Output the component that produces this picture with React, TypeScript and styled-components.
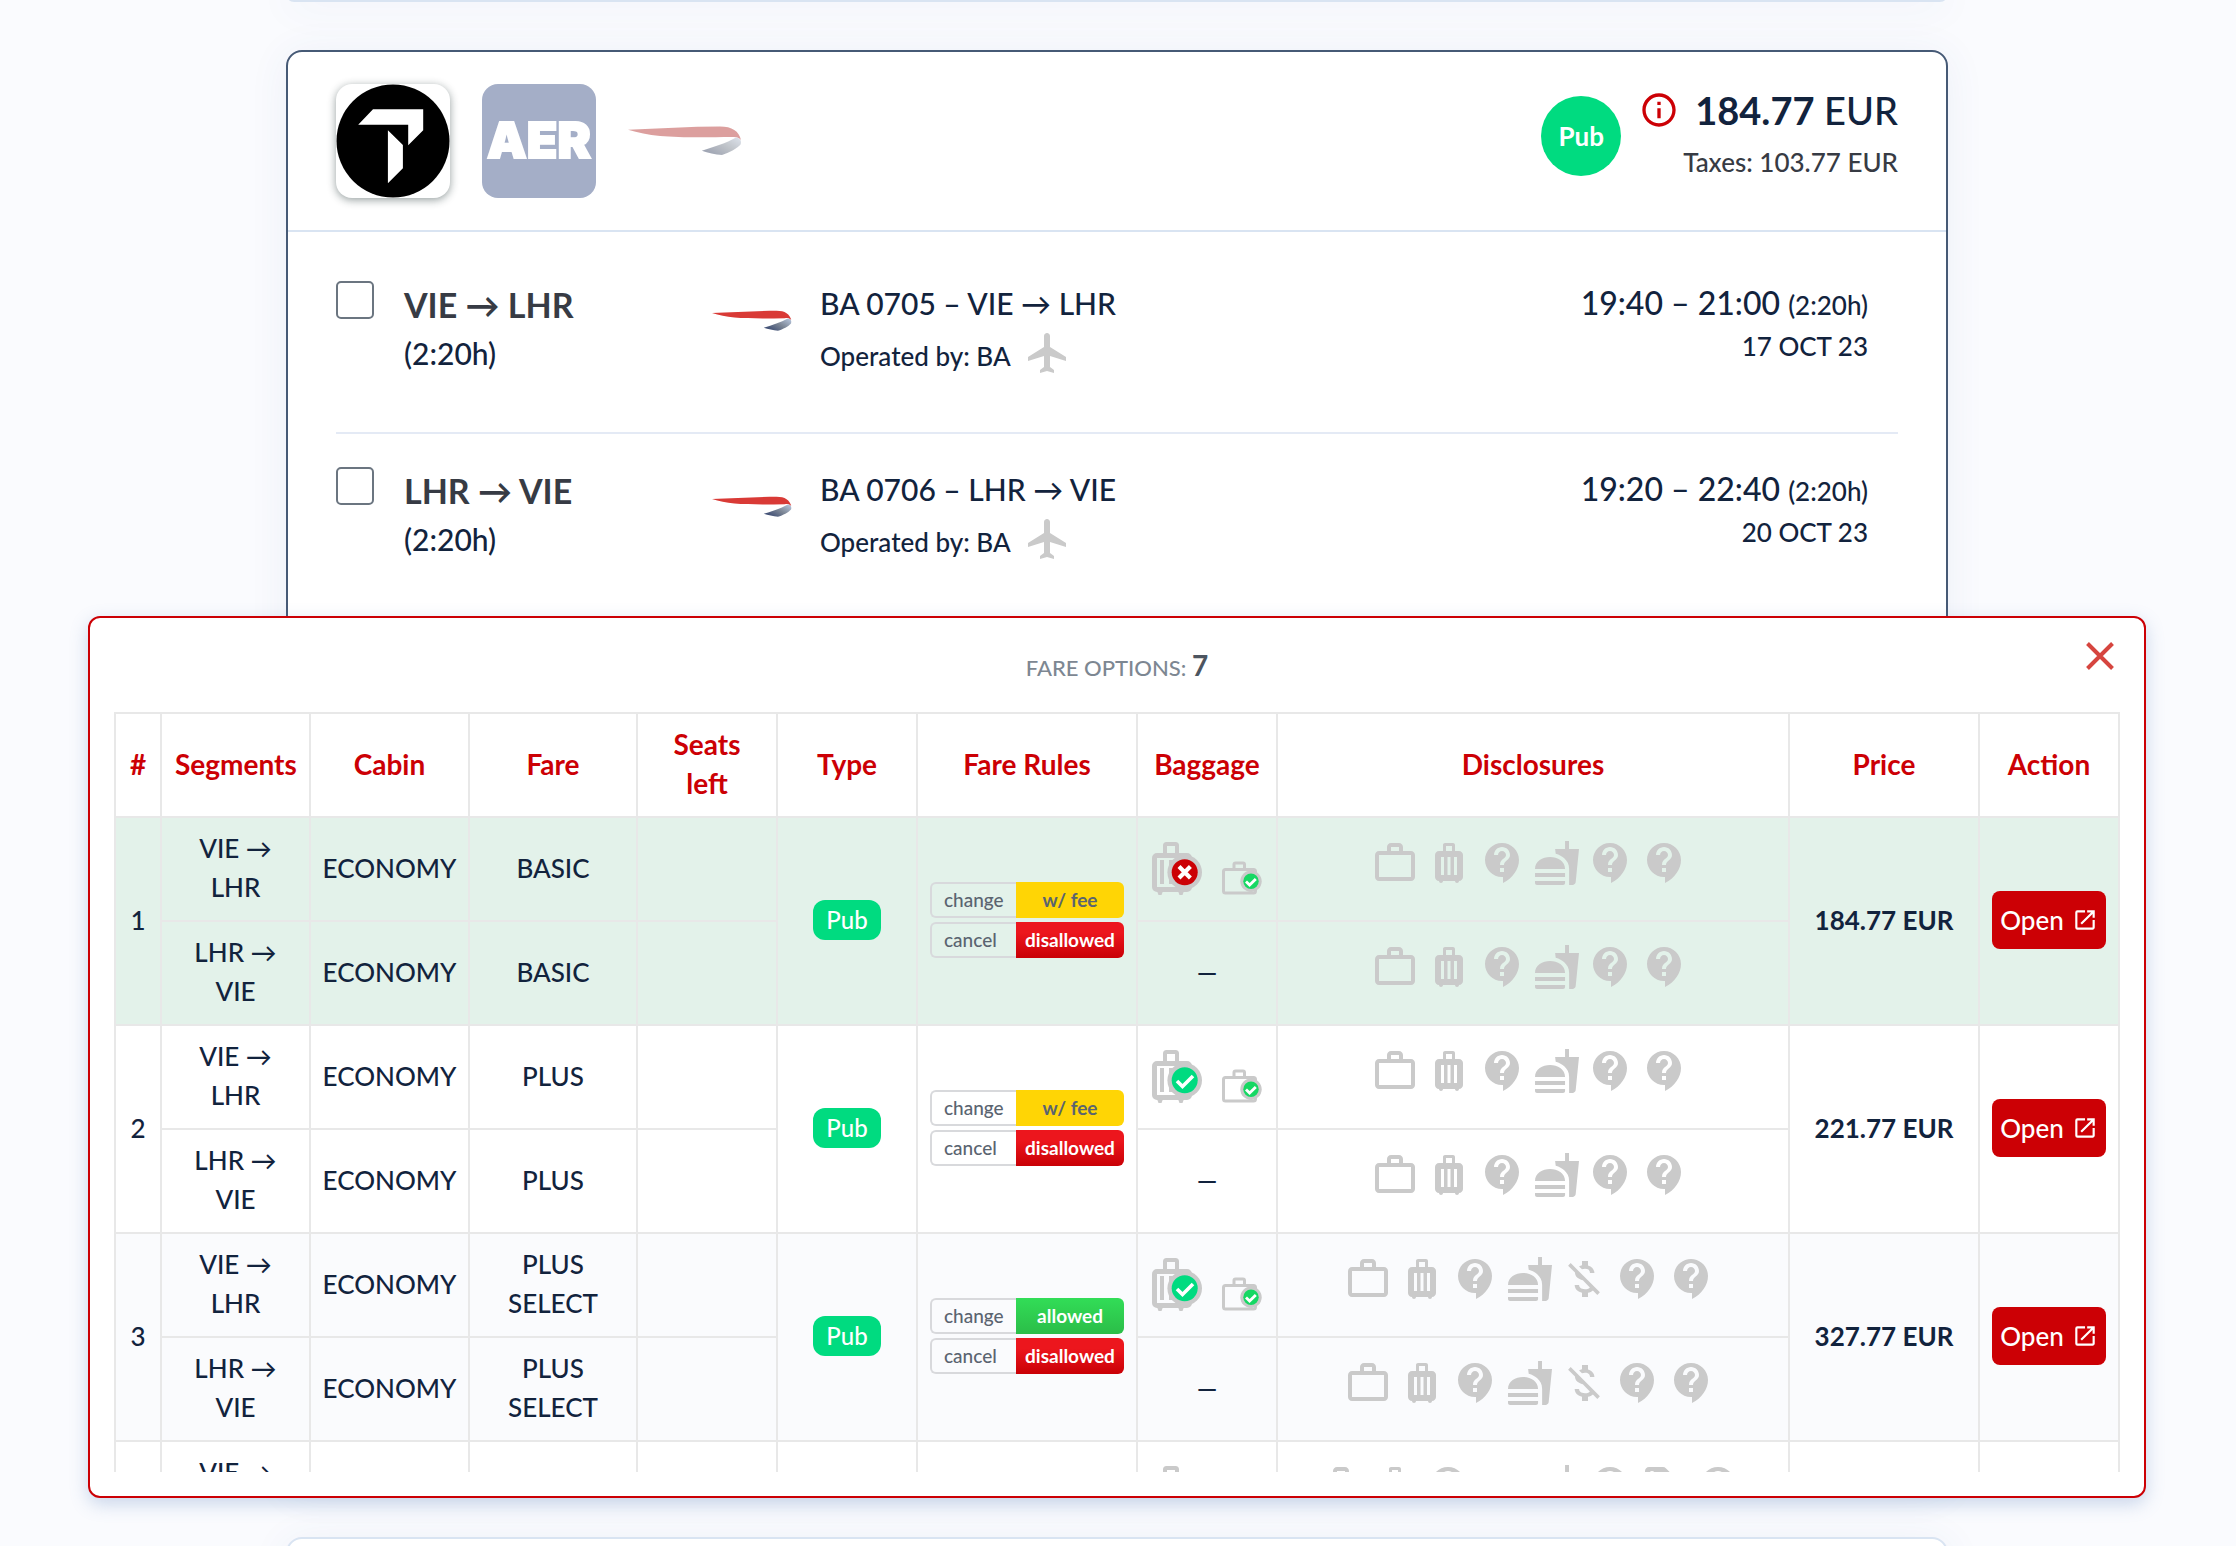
import React from "react";
import styled, { createGlobalStyle, css } from "styled-components";
import {
  MdContactSupport,
  MdFastfood,
  MdFlight,
  MdInfoOutline,
  MdLocalOffer,
  MdLuggage,
  MdMoneyOff,
  MdOpenInNew,
  MdWifi,
  MdWorkOutline,
} from "react-icons/md";

const color = {
  ink: "#12233d",
  inkSoft: "#373b44",
  muted: "#7d8792",
  slate: "#5a6470",
  red: "#cc0005",
  green: "#00db80",
  icon: "#cacaca",
  line: "#e8e8e8",
  cardLine: "#d9e4f2",
  page: "#fafbfe",
};

const GlobalStyle = createGlobalStyle`
  *, *::before, *::after { box-sizing: border-box; }
  body {
    margin: 0;
    background: ${color.page};
    color: ${color.ink};
    font-family: Lato, "Liberation Sans", sans-serif;
    font-size: 26px;
    font-weight: 500;
    line-height: 39px;
  }
`;

/* ---------- page and cards ---------- */

const Page = styled.main`
  height: 100vh;
  overflow: hidden;
  padding: 0 90px 0 88px;
`;

const Results = styled.div`
  display: flex;
  flex-direction: column;
  gap: 48px;
  margin: -14px 198px 0;
`;

const Card = styled.article<{ $active?: boolean }>`
  min-height: 16px;
  background: #fff;
  border: 2px solid ${(p) => (p.$active ? "#465a76" : color.cardLine)};
  border-radius: 16px;
  box-shadow: 0 4px 40px rgba(60, 85, 150, 0.07);
`;

const NextCard = styled(Card)`
  min-height: 80px;
`;

const CardHeader = styled.header`
  display: flex;
  justify-content: space-between;
  align-items: flex-start;
  padding: 32px 48px;
  border-bottom: 2px solid ${color.cardLine};
`;

const Logos = styled.div`
  display: flex;
  gap: 32px;
`;

const LogoTile = styled.div<{ $raised?: boolean; $faded?: boolean }>`
  width: 114px;
  height: 114px;
  border-radius: 16px;
  overflow: hidden;
  opacity: ${(p) => (p.$faded ? 0.5 : 1)};
  filter: ${(p) => (p.$faded ? "saturate(0.75)" : "none")};
  box-shadow: ${(p) => (p.$raised ? "0 2px 8px rgba(20, 40, 40, 0.45)" : "none")};
  svg {
    display: block;
    width: 100%;
    height: 100%;
  }
`;

const Summary = styled.div`
  display: flex;
  align-items: center;
  gap: 18px;
`;

const PubCircle = styled.span`
  display: flex;
  align-items: center;
  justify-content: center;
  width: 80px;
  height: 80px;
  border-radius: 50%;
  background: ${color.green};
  color: #fff;
  font-weight: 700;
`;

const Totals = styled.div`
  text-align: right;
  line-height: 52px;
`;

const TotalPrice = styled.div`
  display: flex;
  align-items: center;
  justify-content: flex-end;
  gap: 16px;
  font-size: 38px;
`;

const InfoButton = styled.button`
  display: flex;
  padding: 0;
  border: 0;
  background: none;
  color: ${color.red};
  font-size: 40px;
`;

const Taxes = styled.div`
  color: ${color.inkSoft};
`;

/* ---------- legs ---------- */

const Legs = styled.div`
  padding: 16px 48px 0;
`;

const Leg = styled.section`
  display: flex;
  align-items: flex-start;
  height: 184px;
  padding: 33px 30px 0 0;
  & + & {
    height: 186px;
    border-top: 2px solid #e4eaf5;
  }
`;

const Check = styled.input`
  appearance: none;
  flex: none;
  width: 38px;
  height: 38px;
  margin: 0 30px 0 0;
  border: 2px solid #6b7580;
  border-radius: 5px;
  background: #fff;
`;

const Route = styled.div`
  flex: 0 0 308px;
  font-size: 30px;
  line-height: 48px;
`;

const RouteName = styled.label`
  display: block;
  color: ${color.inkSoft};
  font-size: 34px;
  font-weight: 700;
`;

const Carrier = styled.div`
  flex: none;
  width: 80px;
  height: 80px;
  margin-right: 28px;
  svg {
    display: block;
    width: 100%;
    height: 100%;
  }
`;

const Flight = styled.div`
  flex: 1;
`;

const FlightName = styled.div`
  font-size: 30px;
  line-height: 44px;
`;

const TimeRange = styled.div`
  font-size: 32px;
  line-height: 44px;
`;

const Small = styled.span`
  font-size: 26px;
`;

const Operated = styled.div`
  display: flex;
  align-items: flex-end;
  gap: 13px;
  margin-top: 4px;
  line-height: 42px;
  svg {
    color: ${color.icon};
    font-size: 48px;
  }
`;

const Times = styled.div`
  text-align: right;
  line-height: 39px;
`;

/* ---------- fare panel ---------- */

const Panel = styled.section`
  position: relative;
  margin: -2px -200px -11px;
  padding: 0 24px 24px;
  background: #fff;
  border: 2px solid ${color.red};
  border-radius: 12px;
  box-shadow: 0 6px 18px rgba(90, 130, 190, 0.3);
`;

const PanelTitle = styled.h2`
  margin: 0;
  height: 94px;
  padding-top: 28px;
  text-align: center;
  color: ${color.muted};
  font-size: 22px;
  font-weight: 500;
  strong {
    color: #4d5560;
    font-size: 28px;
  }
`;

const CloseButton = styled.button`
  position: absolute;
  top: 22px;
  right: 28px;
  padding: 0;
  border: 0;
  background: none;
  svg {
    display: block;
    width: 32px;
    height: 32px;
  }
`;

const TableClip = styled.div`
  max-height: 760px;
  overflow: hidden;
`;

const Table = styled.table`
  width: 100%;
  table-layout: fixed;
  border-collapse: collapse;
  text-align: center;
`;

const Col = styled.col<{ $w?: number }>`
  width: ${(p) => (p.$w ? `${p.$w}px` : "auto")};
`;

const cell = css`
  height: 104px;
  padding: 11px 12px 13px;
  border: 2px solid ${color.line};
  vertical-align: middle;
`;

const Th = styled.th`
  ${cell}
  padding-left: 13px;
  padding-right: 13px;
  color: ${color.red};
  font-size: 28px;
  font-weight: 700;
`;

const Td = styled.td<{ $tight?: boolean }>`
  ${cell}
  ${(p) => p.$tight && "padding-left: 0; padding-right: 0;"}
`;

const PriceTd = styled(Td)`
  font-weight: 700;
`;

const Row = styled.tr<{ $tone: "selected" | "plain" | "alt" }>`
  background: ${(p) => ({ selected: "#e3f2ea", plain: "#fff", alt: "#fafbfd" })[p.$tone]};
`;

const PubTag = styled.span`
  display: block;
  width: fit-content;
  margin: 0 auto;
  padding: 0 13px;
  border-radius: 12px;
  background: ${color.green};
  color: #fff;
  font-size: 24px;
  line-height: 40px;
`;

const Rules = styled.div`
  display: flex;
  flex-direction: column;
  gap: 4px;
  width: 194px;
  margin: 0 auto;
`;

const Rule = styled.div`
  display: flex;
  height: 36px;
  font-size: 19px;
  line-height: 32px;
`;

const RuleName = styled.span`
  flex: 0 0 86px;
  padding-left: 12px;
  border: 2px solid #d8d9dc;
  border-right: 0;
  border-radius: 6px 0 0 6px;
  color: ${color.slate};
  text-align: left;
`;

type Verdict = "w/ fee" | "disallowed" | "allowed";

const verdictStyle = {
  "w/ fee": css`
    background: #ffd505;
    color: ${color.slate};
  `,
  disallowed: css`
    background: linear-gradient(#ec161d 30%, #c90006);
    color: #fff;
  `,
  allowed: css`
    background: linear-gradient(#32dd57, #2bbd48);
    color: #fff;
  `,
};

const RuleValue = styled.span<{ $verdict: Verdict }>`
  flex: 1;
  border-radius: 0 6px 6px 0;
  font-weight: 700;
  line-height: 36px;
  ${(p) => verdictStyle[p.$verdict]}
`;

const Bags = styled.div`
  display: flex;
  justify-content: center;
  align-items: flex-end;
  gap: 20px;
  svg {
    display: block;
  }
`;

const Disclosures = styled.div`
  display: flex;
  justify-content: center;
  margin-bottom: 10px;
  color: ${color.icon};
  font-size: 48px;
  svg {
    flex: none;
    margin-right: 6px;
  }
`;

const OpenButton = styled.button`
  display: flex;
  align-items: center;
  justify-content: center;
  gap: 8px;
  width: 100%;
  height: 58px;
  padding: 0;
  border: 0;
  border-radius: 8px;
  background: ${color.red};
  color: #fff;
  font: inherit;
`;

/* ---------- drawings ---------- */

const ProviderLogo = () => (
  <svg viewBox="0 0 114 114" role="img" aria-label="Provider">
    <circle cx="57" cy="57" r="56.5" fill="#000" />
    <path fill="#fff" d="M37 25.3h50.2v21L72.2 61.3V40.7H22.2zM51.9 46.3l15 14.6v23.4l-15 15z" />
  </svg>
);

const AerLogo = () => (
  <svg viewBox="0 0 114 114" role="img" aria-label="AER">
    <rect width="114" height="114" fill="#a4aec7" />
    <text
      x="57"
      y="74"
      textAnchor="middle"
      fill="#fff"
      stroke="#fff"
      strokeWidth="2"
      fontFamily="Inter, sans-serif"
      fontWeight="900"
      fontSize="50"
    >
      AER
    </text>
  </svg>
);

const Ribbon = ({ id }: { id: string }) => (
  <svg viewBox="0 0 114 114" role="img" aria-label="BA">
    <defs>
      <linearGradient id={id} x1="0" x2="1" y1="0.7" y2="0">
        <stop offset="0" stopColor="#3a4a72" />
        <stop offset="0.5" stopColor="#7d8796" />
        <stop offset="1" stopColor="#b9c8e0" />
      </linearGradient>
    </defs>
    <path
      fill="#d93a36"
      d="M0 45.7C30 44.6 62 42.4 92 42.4C104 42.4 111 47 113 56C111 53.4 108 52.6 104 53C76 53.4 50 53.6 32 52C20 50.8 10 48.6 0 45.7z"
    />
    <path
      fill={`url(#${id})`}
      d="M108 53.6C112 54 114 57 112.6 60.6C109 64.6 101 69 94 71C87 70.4 80 68.6 73.8 66.7C86 62.8 98 59.4 108 53.6z"
    />
  </svg>
);

const CrossIcon = () => (
  <svg viewBox="0 0 32 32" aria-hidden="true">
    <path d="M3.5 3.5l25 25M28.5 3.5l-25 25" stroke="#d6453f" strokeWidth="4" />
  </svg>
);

const CheckedBag = ({ included }: { included: boolean }) => (
  <svg width="50" height="53" viewBox="0 0 50 53" role="img" aria-label="Checked bag">
    <g fill="none" stroke={color.icon}>
      <path d="M13 12V3.5Q13 2 14.5 2h9Q25 2 25 3.5V12" strokeWidth="4" />
      <rect x="2.5" y="13.5" width="35" height="34" rx="2.5" strokeWidth="5" />
      <path d="M10 18v24M19 18v24" strokeWidth="4" />
    </g>
    <path d="M5 49h6l-1.500 4h-3zM26 49h6l-1.500 4h-3z" fill={color.icon} />
    <circle cx="32.700" cy="30.300" r="17.300" fill={color.icon} />
    <circle cx="32.700" cy="30.300" r="13" fill={included ? color.green : color.red} />
    {included ? (
      <path d="M25 31l5.500 5.500L41 26" fill="none" stroke="#fff" strokeWidth="3.600" />
    ) : (
      <path d="M27 24.600l11.400 11.400M38.400 24.600L27 36" stroke="#fff" strokeWidth="4.200" />
    )}
  </svg>
);

const CabinBag = () => (
  <svg width="40" height="34" viewBox="0 0 40 34" role="img" aria-label="Cabin bag">
    <g fill="none" stroke={color.icon} strokeWidth="3">
      <path d="M12 8V3.500Q12 2 13.500 2h7.500Q22.500 2 22.500 3.500V8" />
      <rect x="1.500" y="8.500" width="32" height="23.500" rx="2" />
    </g>
    <circle cx="29" cy="20.300" r="10.700" fill={color.icon} />
    <circle cx="29" cy="20.300" r="7.700" fill="#16d863" />
    <path d="M24 20.500l3.600 3.600 6.200-6.200" fill="none" stroke="#fff" strokeWidth="2.800" />
  </svg>
);

/* ---------- data ---------- */

const legs = [
  { id: "leg-out", route: "VIE → LHR", flight: "BA 0705 – VIE → LHR", time: "19:40 – 21:00", date: "17 OCT 23" },
  { id: "leg-back", route: "LHR → VIE", flight: "BA 0706 – LHR → VIE", time: "19:20 – 22:40", date: "20 OCT 23" },
];

const segments = ["VIE → LHR", "LHR → VIE"];

const disclosureIcons = {
  cabin: MdWorkOutline,
  luggage: MdLuggage,
  help: MdContactSupport,
  food: MdFastfood,
  noRefund: MdMoneyOff,
  wifi: MdWifi,
  offer: MdLocalOffer,
};

type Disclosure = keyof typeof disclosureIcons;

interface Fare {
  name: string;
  tone: "selected" | "plain" | "alt";
  change: Verdict;
  bag: boolean;
  price: string;
  disclosures: Disclosure[];
}

const base: Disclosure[] = ["cabin", "luggage", "help", "food", "help", "help"];

const fares: Fare[] = [
  { name: "BASIC", tone: "selected", change: "w/ fee", bag: false, price: "184.77 EUR", disclosures: base },
  { name: "PLUS", tone: "plain", change: "w/ fee", bag: true, price: "221.77 EUR", disclosures: base },
  {
    name: "PLUS SELECT",
    tone: "alt",
    change: "allowed",
    bag: true,
    price: "327.77 EUR",
    disclosures: ["cabin", "luggage", "help", "food", "noRefund", "help", "help"],
  },
  {
    name: "FLEX",
    tone: "plain",
    change: "allowed",
    bag: true,
    price: "412.77 EUR",
    disclosures: ["cabin", "luggage", "help", "wifi", "food", "help", "offer", "help"],
  },
];

const columns: { title: string; width?: number }[] = [
  { title: "#", width: 46 },
  { title: "Segments", width: 149 },
  { title: "Cabin", width: 159 },
  { title: "Fare", width: 168 },
  { title: "Seats left", width: 140 },
  { title: "Type", width: 140 },
  { title: "Fare Rules", width: 220 },
  { title: "Baggage", width: 140 },
  { title: "Disclosures" },
  { title: "Price", width: 190 },
  { title: "Action", width: 140 },
];

const FareRows = ({ fare, index }: { fare: Fare; index: number }) => (
  <>
    {segments.map((segment, i) => (
      <Row key={segment} $tone={fare.tone}>
        {i === 0 && (
          <Td rowSpan={2} $tight>
            {index + 1}
          </Td>
        )}
        <Td>{segment}</Td>
        <Td $tight>ECONOMY</Td>
        <Td>{fare.name}</Td>
        <Td />
        {i === 0 && (
          <>
            <Td rowSpan={2}>
              <PubTag>Pub</PubTag>
            </Td>
            <Td rowSpan={2}>
              <Rules>
                <Rule>
                  <RuleName>change</RuleName>
                  <RuleValue $verdict={fare.change}>{fare.change}</RuleValue>
                </Rule>
                <Rule>
                  <RuleName>cancel</RuleName>
                  <RuleValue $verdict="disallowed">disallowed</RuleValue>
                </Rule>
              </Rules>
            </Td>
          </>
        )}
        <Td>
          {i === 0 ? (
            <Bags>
              <CheckedBag included={fare.bag} />
              <CabinBag />
            </Bags>
          ) : (
            "—"
          )}
        </Td>
        <Td $tight>
          <Disclosures>
            {fare.disclosures.map((key, n) => {
              const Icon = disclosureIcons[key];
              return <Icon key={n} />;
            })}
          </Disclosures>
        </Td>
        {i === 0 && (
          <>
            <PriceTd rowSpan={2}>{fare.price}</PriceTd>
            <Td rowSpan={2}>
              <OpenButton type="button">
                Open <MdOpenInNew />
              </OpenButton>
            </Td>
          </>
        )}
      </Row>
    ))}
  </>
);

export default function App() {
  return (
    <>
      <GlobalStyle />
      <Page>
        <Results>
          <Card />
          <Card $active>
            <CardHeader>
              <Logos>
                <LogoTile $raised>
                  <ProviderLogo />
                </LogoTile>
                <LogoTile>
                  <AerLogo />
                </LogoTile>
                <LogoTile $faded>
                  <Ribbon id="tail-header" />
                </LogoTile>
              </Logos>
              <Summary>
                <PubCircle>Pub</PubCircle>
                <Totals>
                  <TotalPrice>
                    <InfoButton type="button" aria-label="Price details">
                      <MdInfoOutline />
                    </InfoButton>
                    <span>
                      <strong>184.77</strong> EUR
                    </span>
                  </TotalPrice>
                  <Taxes>Taxes: 103.77 EUR</Taxes>
                </Totals>
              </Summary>
            </CardHeader>
            <Legs>
              {legs.map((leg) => (
                <Leg key={leg.id}>
                  <Check type="checkbox" id={leg.id} />
                  <Route>
                    <RouteName htmlFor={leg.id}>{leg.route}</RouteName>
                    (2:20h)
                  </Route>
                  <Carrier>
                    <Ribbon id={`tail-${leg.id}`} />
                  </Carrier>
                  <Flight>
                    <FlightName>{leg.flight}</FlightName>
                    <Operated>
                      Operated by: BA <MdFlight />
                    </Operated>
                  </Flight>
                  <Times>
                    <TimeRange>
                      {leg.time} <Small>(2:20h)</Small>
                    </TimeRange>
                    {leg.date}
                  </Times>
                </Leg>
              ))}
            </Legs>
            <Panel>
              <PanelTitle>
                FARE OPTIONS: <strong>7</strong>
              </PanelTitle>
              <CloseButton type="button" aria-label="Close">
                <CrossIcon />
              </CloseButton>
              <TableClip>
                <Table>
                  <colgroup>
                    {columns.map((c) => (
                      <Col key={c.title} $w={c.width} />
                    ))}
                  </colgroup>
                  <thead>
                    <tr>
                      {columns.map((c) => (
                        <Th key={c.title} scope="col">
                          {c.title}
                        </Th>
                      ))}
                    </tr>
                  </thead>
                  <tbody>
                    {fares.map((fare, i) => (
                      <FareRows key={fare.name} fare={fare} index={i} />
                    ))}
                  </tbody>
                </Table>
              </TableClip>
            </Panel>
          </Card>
          <NextCard />
        </Results>
      </Page>
    </>
  );
}
